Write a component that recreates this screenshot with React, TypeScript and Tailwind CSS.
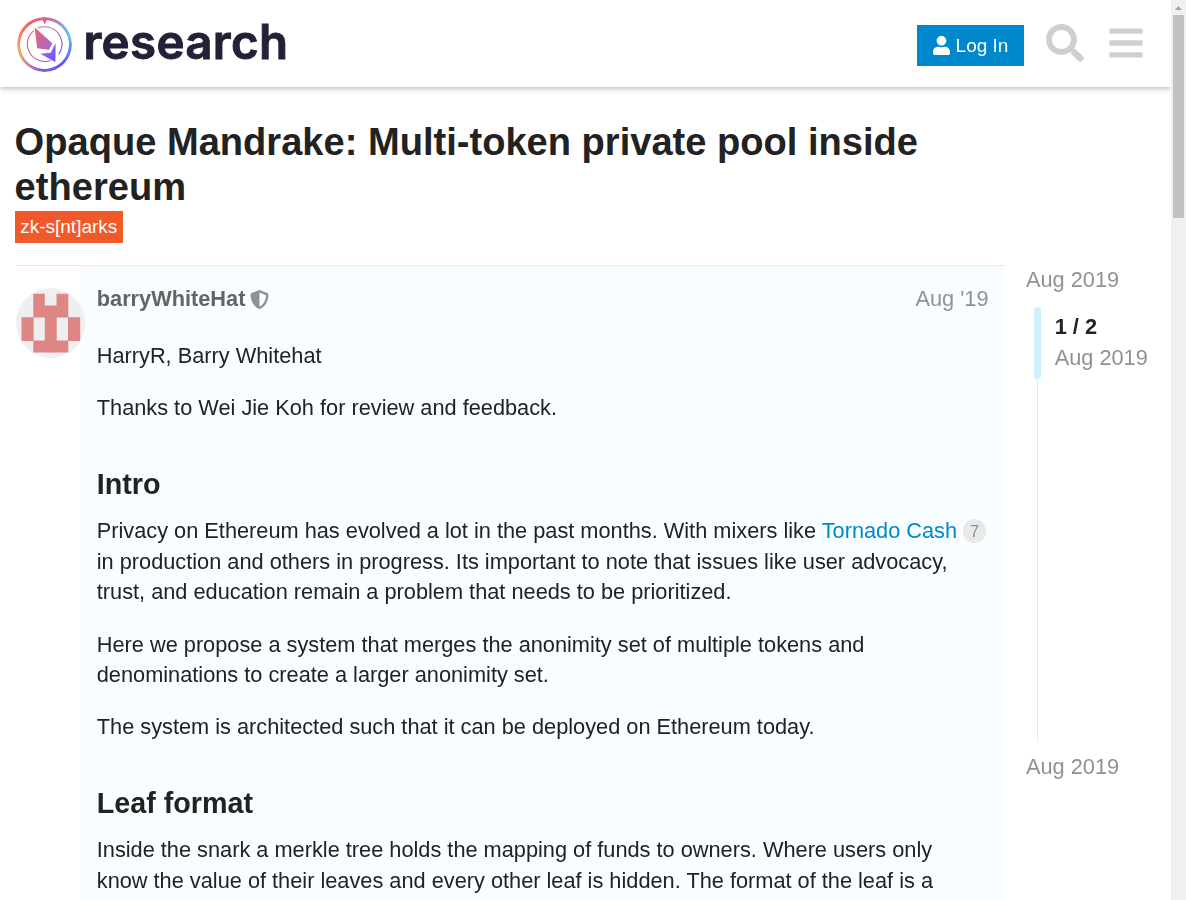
import { FaBars, FaSearch, FaShieldAlt, FaUser } from "react-icons/fa";

function Logo() {
  return (
    <svg className="block overflow-visible" width="300" height="70" viewBox="0 -5 300 70" role="img" aria-label="research">
      <defs>
        <linearGradient id="warm" x1="0" y1="0.15" x2="1" y2="0.85">
          <stop offset="0" stopColor="#ff5c5f" />
          <stop offset="0.5" stopColor="#b666b4" />
          <stop offset="1" stopColor="#5a55ff" />
        </linearGradient>
        <linearGradient id="gem" x1="0" y1="0" x2="1" y2="0.7">
          <stop offset="0" stopColor="#f4606d" />
          <stop offset="1" stopColor="#a767d0" />
        </linearGradient>
        <linearGradient id="shard" x1="0" y1="0" x2="1" y2="1">
          <stop offset="0" stopColor="#a96cf0" />
          <stop offset="1" stopColor="#6b4cff" />
        </linearGradient>
      </defs>
      <foreignObject x="1" y="1.5" width="58" height="58">
        <div className="mt-[1px] ml-[1px] h-[55px] w-[55px] rounded-full bg-[conic-gradient(#d9678c,#8fa5cc_45deg,#62c3f4_72deg,#5a91fa_95deg,#6457fb_140deg,#8257e6_185deg,#cb8aa6_220deg,#f2ac63_255deg,#f78a5d_285deg,#fa625e_320deg,#d9678c)] [mask:radial-gradient(circle,transparent_24px,black_24.7px)]" />
      </foreignObject>
      <path d="M27 5h5.4l-2.7 5.2z" fill="#d9607f" />
      <path d="M40.8 43.3a17.3 17.3 0 1 1 2.8-3" fill="none" stroke="url(#warm)" strokeWidth="1.1" />
      <path d="M19.6 13.2 37.3 29.2 34 35.8 22.2 34.2z" fill="none" stroke="#fff" strokeWidth="2.5" />
      <path d="M40.6 29 40.4 48 25.2 39.8 35.8 38.8z" fill="none" stroke="#fff" strokeWidth="2" />
      <path d="M19.6 13.2 37.3 29.2 34 35.8 22.2 34.2z" fill="url(#gem)" />
      <path d="M40.6 29 40.4 48 25.2 39.8 35.8 38.8z" fill="url(#shard)" />
      <text x="68.5" y="44.6" fill="#242038" stroke="#242038" strokeWidth="0.9" fontFamily="Inter, sans-serif" fontSize="47.5" fontWeight="600" textLength="204.5">research</text>
    </svg>
  );
}

function Header() {
  return (
    <header className="relative z-10 flex h-[87px] shrink-0 items-center bg-white pr-[28px] pl-[15px] shadow-[0_2px_5px_0px_rgba(0,0,0,0.25)] will-change-transform">
      <Logo />
      <button className="mt-[4px] ml-auto flex h-[41px] w-[107px] items-center justify-center gap-[6px] bg-[#0088cc] pt-px text-[19.03px] text-white">
        <FaUser className="mb-px h-[19px] w-[17px]" preserveAspectRatio="none" />
        <span>Log In</span>
      </button>
      <FaSearch className="mb-[1px] ml-[22px] h-[38px] w-[38px] text-[#cfcfcf]" />
      <FaBars className="mb-[1px] ml-[25px] h-[38px] w-[34px] text-[#cfcfcf]" />
    </header>
  );
}

function Avatar() {
  return (
    <svg className="block" width="70" height="70" viewBox="0 0 70 70" aria-label="barryWhiteHat">
      <ellipse cx="34.6" cy="35" rx="34.6" ry="35" fill="#efefef" />
      <path
        d="M17.3 5.7H28.8V17.5H40.5V5.7H52.3V29.2H64.2V52.9H52.3V64.5H17.3V52.9H5.5V29.2H17.3z M17.6 29.4V52.6H28.8V29.4z M40.7 29.4V52.6H52V29.4z"
        fill="#dd8685"
        fillRule="evenodd"
      />
    </svg>
  );
}

function Post() {
  return (
    <article className="ml-[1px] flex w-[988px] border-t border-[#e9e9e9] will-change-transform">
      <div className="relative z-10 w-[65.25px] shrink-0 pt-[22px]"><Avatar /></div>
      <div className="h-[650px] w-[922.75px] overflow-hidden bg-[#f8fdff] pt-[18px] pr-[15.5px] pl-[15.5px]">
        <div className="flex h-[31px] items-center">
          <span className="font-bold text-[#646464]">barryWhiteHat</span>
          <FaShieldAlt className="mb-px ml-[5px] h-[19px] w-[19px] text-[#919191]" />
          <span className="ml-auto text-[#919191]">Aug '19</span>
        </div>
        <div className="pt-[26px] whitespace-nowrap">
          <p>HarryR, Barry Whitehat</p>
          <p className="mt-[21.8px]">Thanks to Wei Jie Koh for review and feedback.</p>
          <h2 className="mt-[43px] mb-[15px] text-[28.7px] leading-[34.5px] font-bold">Intro</h2>
          <p>
            Privacy on Ethereum has evolved a lot in the past months. With mixers like <a className="text-[#0088cc]">Tornado Cash</a>
            <span className="ml-[6px] inline-block h-[24px] w-[23px] rounded-full bg-[#e9e9e9] text-center align-[1px] text-[16.5px] leading-[24px] text-[#919191]">7</span>
            <br />
            in production and others in progress. Its important to note that issues like user advocacy,<br />
            trust, and education remain a problem that needs to be prioritized.
          </p>
          <p className="mt-[21.8px]">
            Here we propose a system that merges the anonimity set of multiple tokens and<br />
            denominations to create a larger anonimity set.
          </p>
          <p className="mt-[21.8px]">The system is architected such that it can be deployed on Ethereum today.</p>
          <h2 className="mt-[43px] mb-[15px] text-[28.7px] leading-[34.5px] font-bold">Leaf format</h2>
          <p>
            Inside the snark a merkle tree holds the mapping of funds to owners. Where users only<br />
            know the value of their leaves and every other leaf is hidden. The format of the leaf is a
          </p>
        </div>
      </div>
    </article>
  );
}

function Timeline() {
  return (
    <aside className="ml-[22px] whitespace-nowrap text-[#919191] will-change-transform">
      <div>Aug 2019</div>
      <div className="mt-[11px] flex h-[435px]">
        <div className="ml-[8px] flex w-[7px] flex-col items-center">
          <div className="h-[72px] w-[7px] rounded-[4px] bg-[#d1f0ff]" />
          <div className="mr-[1px] w-px flex-1 bg-[#d1f0ff]" />
        </div>
        <div className="ml-[13.7px] pt-[5px]">
          <div className="font-bold text-[#222222]">1 / 2</div>
          <div className="pt-[0.5px]">Aug 2019</div>
        </div>
      </div>
      <div className="mt-[10px]">Aug 2019</div>
    </aside>
  );
}

function Scrollbar() {
  return (
    <div className="flex h-full w-[15px] shrink-0 flex-col items-center bg-[#f0f0f0]">
      <svg className="block shrink-0" width="15" height="15" viewBox="0 0 15 15"><path d="M4 10 7.5 6 11 10z" fill="#a3a3a3" /></svg>
      <div className="ml-[-1px] h-[203px] w-[11px] bg-[#c1c1c1]" />
    </div>
  );
}

export default function App() {
  return (
    <div className="flex h-[900px] w-[1186px] overflow-hidden bg-white font-['Liberation_Sans',Arial,sans-serif] text-[21.75px] leading-[30.5px] text-[#222222]">
      <div className="flex h-full w-[1171px] flex-col overflow-hidden">
        <Header />
        <main className="pt-[33px] pl-[15px]">
          <h1 className="ml-[-0.4px] w-[990px] text-[38.08px] leading-[45px] font-bold">
            Opaque Mandrake: Multi-token private pool inside<br />ethereum
          </h1>
          <div className="mt-[1px] flex h-[32px] w-[108px] items-center justify-center bg-[#f1592a] pr-[0.5px] text-[19.03px] text-white">zk-s[nt]arks</div>
          <div className="mt-[22px] flex">
            <Post />
            <Timeline />
          </div>
        </main>
      </div>
      <Scrollbar />
    </div>
  );
}
